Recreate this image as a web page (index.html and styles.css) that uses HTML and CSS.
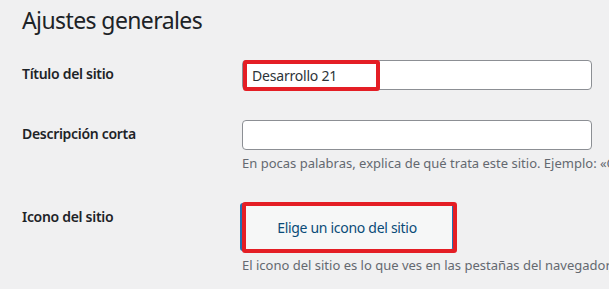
FILE: index.html
```html
<!DOCTYPE html>
<html lang="es">
<head>
    <meta charset="UTF-8">
    <meta name="viewport" content="width=device-width, initial-scale=1.0">
    <title>Ajustes generales</title>
    <link rel="stylesheet" href="styles.css">
</head>
<body>
    <div class="wrap">
        <h1>Ajustes generales</h1>

        <div class="form-row">
            <label class="row-label" for="blogname">Título del sitio</label>
            <div class="row-field">
                <div class="mark-holder">
                    <input id="blogname" class="text-input" type="text" value="Desarrollo 21">
                    <!-- marca roja sobre el valor -->
                    <span class="mark mark-title"></span>
                </div>
            </div>
        </div>

        <div class="form-row">
            <label class="row-label" for="blogdescription">Descripción corta</label>
            <div class="row-field">
                <input id="blogdescription" class="text-input" type="text" value="">
                <p class="help">En pocas palabras, explica de qué trata este sitio. Ejemplo: «Otro sitio realizado con WordPress.»</p>
            </div>
        </div>

        <div class="form-row">
            <div class="row-label">Icono del sitio</div>
            <div class="row-field">
                <div class="mark-holder">
                    <button class="icon-button" type="button">Elige un icono del sitio</button>
                    <!-- marca roja sobre el botón -->
                    <span class="mark mark-button"></span>
                </div>
                <p class="help help-button">El icono del sitio es lo que ves en las pestañas del navegador, barras de marcadores y dentro de las aplicaciones móviles de WordPress.</p>
            </div>
        </div>
    </div>
</body>
</html>
```

FILE: styles.css
```css
body {
    margin: 0;
    background: #f0f0f1;
    color: #1d2327;
    font-family: "Noto Sans", "Open Sans", sans-serif;
    overflow: hidden;
}
.wrap {
    padding: 0 0 0 22px;
    white-space: nowrap;
}
h1 {
    font-size: 23px;
    font-weight: 400;
    line-height: 30px;
    letter-spacing: -0.6px;
    margin: 5px 0 10px;
    padding: 0;
}
.form-row {
    display: flex;
}
.row-label {
    width: 220px;
    flex: none;
    padding: 20px 0;
    font-size: 14px;
    font-weight: 600;
    line-height: 18px;
    letter-spacing: -0.3px;
}
.row-field {
    padding: 15px 0;
}
.mark-holder {
    position: relative;
    display: inline-block;
    vertical-align: top;
}
.text-input {
    display: block;
    box-sizing: border-box;
    width: 350px;
    height: 30px;
    margin: 0;
    padding: 0 8px 0 9px;
    border: 1px solid #8c8f94;
    border-radius: 4px;
    background: #fff;
    color: #2c3338;
    font-family: inherit;
    font-size: 14px;
    letter-spacing: -0.2px;
}
.help {
    margin: 4px 0 0;
    font-size: 13px;
    line-height: 19px;
    color: #646970;
}
.icon-button {
    display: block;
    box-sizing: border-box;
    width: 213px;
    height: 48px;
    margin: 0 0 0 -2px;
    padding: 0 10px;
    border: 1px solid #2271b1;
    border-left-width: 2px;
    border-radius: 3px;
    background: #f6f7f7;
    color: #0a4b78;
    font-family: inherit;
    font-size: 14px;
    letter-spacing: -0.3px;
}
.help-button {
    margin-top: 5px;
}
.mark {
    position: absolute;
    box-sizing: border-box;
    border: 4px solid #e41e25;
    border-radius: 3px;
    pointer-events: none;
}
.mark-title {
    left: 1px;
    top: 0;
    width: 137px;
    height: 31px;
}
.mark-button {
    left: 0;
    top: -1px;
    width: 215px;
    height: 51px;
}
```
